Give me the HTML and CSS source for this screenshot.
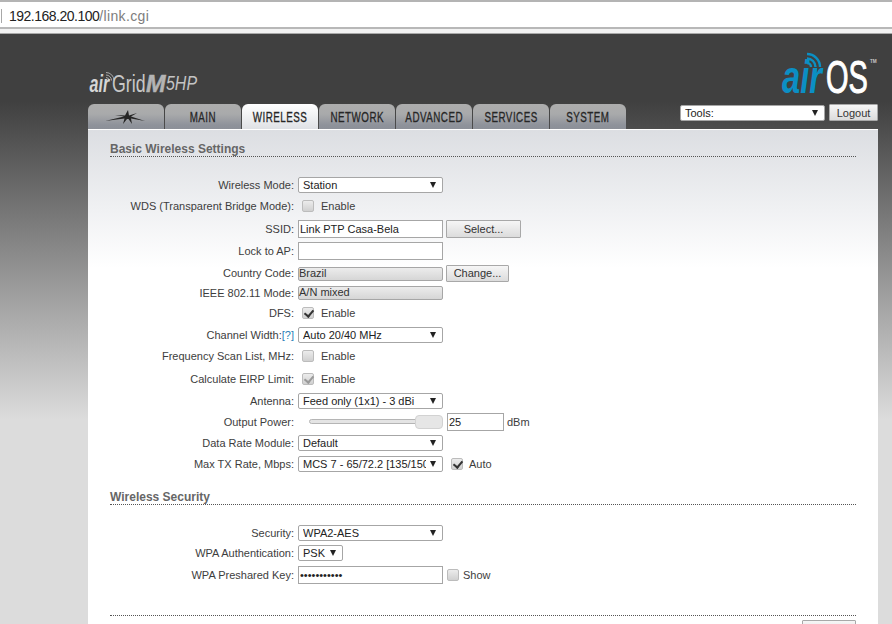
FILE: index.html
```html
<!DOCTYPE html>
<html lang="en">
<head>
<meta charset="utf-8">
<title>airOS - Wireless</title>
<link rel="stylesheet" href="styles.css">
</head>
<body>
<div class="browser">
  <div class="address"><span class="sep"></span><span class="host">192.168.20.100</span><span class="path">/link.cgi</span></div>
</div>
<div class="page">
  <header class="top">
    <svg class="logo-grid" viewBox="0 0 110 26" width="110" height="26" role="img" aria-label="airGrid M5HP">
      <g fill="none" stroke="#b4b4b4" stroke-width="0.9"><path d="M18 7.500a3 3 0 0 1 3 3"/><path d="M18 5a5.500 5.500 0 0 1 5.500 5.500"/><path d="M18 2.500a8 8 0 0 1 8 8"/></g>
      <text class="g-air" transform="translate(1.500 22) scale(.7 1)">air</text>
      <text class="g-grid" transform="translate(24 22) scale(.74 1)">Grid</text>
      <text class="g-m" transform="translate(58 22) scale(.98 1)">M</text>
      <text class="g-hp" transform="translate(78 20) scale(.76 1)">5HP</text>
    </svg>
    <svg class="logo-os" viewBox="0 0 98 54" width="98" height="54" role="img" aria-label="airOS">
      <g fill="none" stroke="#0b8fc4" stroke-width="2.400"><path d="M27 12a4 4 0 0 1 4 4"/><path d="M27 7.500a8.500 8.500 0 0 1 8.500 8.500"/><path d="M27 3a13 13 0 0 1 13 13"/></g>
      <text class="o-air" transform="translate(2 42) scale(.71 1)">air</text>
      <text class="o-os" transform="translate(46 42) scale(.63 1)">OS</text>
      <text class="o-tm" transform="translate(90 12) scale(.85 1)">TM</text>
    </svg>
  </header>
  <div class="navrow">
    <nav class="tabs">
      <a class="tab">
        <svg class="dish" viewBox="0 0 42 16" width="42" height="16" aria-hidden="true">
          <path fill="#262626" d="M0 12 19 7.500 10 6 20 6.500 23 1 24 6.500 32 4 26 7.500 40 12 26 9.500 27 15 23.500 10 22 10 18 15 19.500 9.500Z"/>
        </svg>
      </a>
      <a class="tab"><span class="tab-text">MAIN</span></a>
      <a class="tab active"><span class="tab-text">WIRELESS</span></a>
      <a class="tab"><span class="tab-text">NETWORK</span></a>
      <a class="tab"><span class="tab-text">ADVANCED</span></a>
      <a class="tab"><span class="tab-text">SERVICES</span></a>
      <a class="tab"><span class="tab-text">SYSTEM</span></a>
    </nav>
    <div class="tools">
      <span class="sel-wrap tools-sel"><select><option>Tools:</option></select></span>
      <button class="btn logout" type="button">Logout</button>
    </div>
  </div>
  <main class="panel">
    <h2 class="heading">Basic Wireless Settings</h2>
    <div class="row h20"><label>Wireless Mode:</label><span class="sel-wrap"><select><option>Station</option></select></span></div>
    <div class="row h22"><label>WDS (Transparent Bridge Mode):</label><span class="check"><input type="checkbox"><i class="box"></i></span><span class="chk-label">Enable</span></div>
    <div class="row h24"><label>SSID:</label><input class="text" type="text" value="Link PTP Casa-Bela"><button class="btn select-btn" type="button">Select...</button></div>
    <div class="row h20"><label>Lock to AP:</label><input class="text" type="text"></div>
    <div class="row h24"><label>Country Code:</label><span class="readonly cc">Brazil</span><button class="btn change-btn" type="button">Change...</button></div>
    <div class="row h16"><label>IEEE 802.11 Mode:</label><span class="readonly">A/N mixed</span></div>
    <div class="row h24"><label>DFS:</label><span class="check"><input type="checkbox" checked><i class="box on"></i></span><span class="chk-label">Enable</span></div>
    <div class="row h20"><label>Channel Width:<a class="help">[?]</a></label><span class="sel-wrap"><select><option>Auto 20/40 MHz</option></select></span></div>
    <div class="row h22"><label>Frequency Scan List, MHz:</label><span class="check"><input type="checkbox"><i class="box"></i></span><span class="chk-label">Enable</span></div>
    <div class="row h24"><label>Calculate EIRP Limit:</label><span class="check"><input type="checkbox" checked disabled><i class="box on dim"></i></span><span class="chk-label">Enable</span></div>
    <div class="row h20"><label>Antenna:</label><span class="sel-wrap"><select><option>Feed only (1x1) - 3 dBi</option></select></span></div>
    <div class="row h22"><label>Output Power:</label><span class="slider"><i class="track"></i><i class="thumb"></i></span><input class="text power" type="text" value="25"><span class="unit">dBm</span></div>
    <div class="row h20"><label>Data Rate Module:</label><span class="sel-wrap"><select><option>Default</option></select></span></div>
    <div class="row h22"><label>Max TX Rate, Mbps:</label><span class="sel-wrap"><select><option>MCS 7 - 65/72.2 [135/150]</option></select></span><span class="check auto"><input type="checkbox" checked><i class="box on"></i></span><span class="chk-label">Auto</span></div>

    <h2 class="heading second">Wireless Security</h2>
    <div class="row h20"><label>Security:</label><span class="sel-wrap"><select><option>WPA2-AES</option></select></span></div>
    <div class="row h20"><label>WPA Authentication:</label><span class="sel-wrap psk"><select><option>PSK</option></select></span></div>
    <div class="row h24"><label>WPA Preshared Key:</label><input class="text" type="password" value="12345678901"><span class="check show"><input type="checkbox"><i class="box"></i></span><span class="chk-label">Show</span></div>

    <div class="footer"><button class="btn change" type="button" aria-label="Change"></button></div>
  </main>
</div>
</body>
</html>
```
FILE: styles.css
```css
* { box-sizing: border-box; }
html, body { height: 100%; }
body {
  margin: 0;
  height: 624px;
  overflow: hidden;
  background: #fff;
  font-family: "Liberation Sans", Arial, sans-serif;
  font-size: 11px;
  color: #333;
  display: flex;
  flex-direction: column;
}

/* browser chrome */
.browser {
  height: 34px;
  flex: none;
  border-top: 2px solid #b4b4b4;
  background: #f2f2f2;
  border-bottom: 1px solid #a9a9a9;
}
.address {
  height: 27px;
  background: #fff;
  border-bottom: 2px solid #b8b8b8;
  display: flex;
  align-items: center;
  padding-left: 1px;
  padding-top: 3px;
  font-size: 14px;
}
.sep { width: 1px; height: 14px; background: #a8a8a8; margin-right: 7px; }
.host { color: #222; letter-spacing: -0.5px; }
.path { color: #7d7d7d; letter-spacing: 0.35px; }

/* page */
.page {
  flex: 1;
  min-height: 0;
  overflow: hidden;
  padding-left: 88px;
  width: 892px;
  background: linear-gradient(#404040 0, #404040 68px, #dcdcdc 386px);
}
.top {
  width: 790px;
  height: 70px;
  display: flex;
  justify-content: space-between;
  align-items: flex-end;
}
.logo-grid { margin-bottom: 8px; }
.logo-os { margin-bottom: -1px; }
.g-air { font: italic 700 23px "Liberation Sans", sans-serif; fill: #d6d6d6; }
.g-grid { font: 400 24px "Liberation Sans", sans-serif; fill: #c8c8c8; }
.g-m { font: italic 700 24px "Liberation Sans", sans-serif; fill: #b4b4b4; stroke: #b4b4b4; stroke-width: .5px; }
.g-hp { font: italic 400 21px "Liberation Sans", sans-serif; fill: #c4c4c4; }
.o-air { font: italic 700 46px "Liberation Sans", sans-serif; fill: #0b8fc4; }
.o-os { font: 400 46px "Liberation Sans", sans-serif; fill: #fff; stroke: #fff; stroke-width: 1px; }
.o-tm { font: 700 5.500px "Liberation Sans", sans-serif; fill: #c8c8c8; }

.navrow {
  width: 790px;
  height: 25px;
  display: flex;
  justify-content: space-between;
}
.tabs { display: flex; gap: 1px; }
.tab {
  width: 76px;
  height: 25px;
  display: flex;
  align-items: center;
  justify-content: center;
  border-radius: 6px 6px 0 0;
  background: linear-gradient(#adadad 0, #a9aaab 40%, #8e929a 85%, #8c9098 100%);
  color: #262626;
  padding-top: 1px;
}
.tab-text {
  display: inline-block;
  font-size: 14px;
  letter-spacing: 0.7px;
  transform: scaleX(.7);
  -webkit-text-stroke: 0.3px #262626;
}
.tab.active {
  background: linear-gradient(#fff 0, #f3f4f5 40%, #dfe1e5 100%);
}
.dish { display: block; margin-top: -1px; }
.tools { display: flex; gap: 4px; align-items: flex-start; }
.tools-sel { width: 144px; margin-top: 1px; }
.tools-sel select { border-width: 1px; border-color: #8a8a8a; border-radius: 0; padding-left: 4px; font-size: 10.500px; }

/* panel */
.panel {
  width: 790px;
  height: 495px;
  overflow: hidden;
  padding: 12px 22px 0;
  border-top: 1px solid #fff;
  background: linear-gradient(#dcdee2 0, #f0f1f3 80px, #fff 138px);
}
.heading {
  margin: -1px 0 18px;
  height: 16px;
  line-height: 16px;
  font-size: 12px;
  font-weight: 700;
  color: #666;
  border-bottom: 1px dotted #555;
}
.heading.second { margin-top: 14px; line-height: 17px; }

.row { display: flex; align-items: center; }
.h16 { height: 16px; }
.h20 { height: 20px; }
.h22 { height: 22px; }
.h24 { height: 24px; }
.row label { width: 184px; margin-right: 4px; text-align: right; color: #3d3d3d; flex: none; white-space: nowrap; }
.help { color: #2a7fb8; }

.sel-wrap { position: relative; display: block; width: 145px; height: 16px; }
.sel-wrap select {
  appearance: none;
  width: 100%;
  height: 100%;
  margin: 0;
  padding: 0 16px 0 4px;
  font: 11px "Liberation Sans", sans-serif;
  color: #222;
  background: #fff;
  border: 1px solid #a6a6a6;
  border-radius: 2px;
  display: block;
}
.sel-wrap::after {
  content: "";
  position: absolute;
  right: 7px;
  top: 5px;
  border-left: 3.500px solid transparent;
  border-right: 3.500px solid transparent;
  border-top: 6px solid #222;
  pointer-events: none;
}
.sel-wrap.psk { width: 45px; }

.text {
  width: 145px;
  height: 18px;
  margin: 0;
  padding: 0 1px;
  font: 11px "Liberation Sans", sans-serif;
  color: #222;
  background: #fff;
  border: 1px solid #a6a6a6;
  border-radius: 0;
}
.text.power { width: 57px; margin-left: 4px; }
.unit { margin-left: 3px; color: #3d3d3d; }

.readonly {
  display: block;
  width: 145px;
  height: 14px;
  line-height: 11px;
  padding-left: 0;
  color: #333;
  border: 1px solid #a6a6a6;
  border-radius: 2px;
  background: linear-gradient(#ececec, #d6d6d6);
}
.cc { margin-top: 1px; }

.btn {
  height: 18px;
  padding: 0;
  margin: 0;
  font: 11px "Liberation Sans", sans-serif;
  color: #333;
  border: 1px solid #a8a8a8;
  border-radius: 1px;
  background: linear-gradient(#f6f6f6, #dcdcdc);
}
.select-btn { width: 75px; margin-left: 3px; }
.change-btn { width: 63px; margin-left: 3px; height: 17px; }
.logout { width: 49px; height: 17px; }
.change { width: 54px; flex: none; }

.check { position: relative; display: block; width: 12px; height: 12px; margin-left: 4px; flex: none; }
.check input { position: absolute; inset: 0; margin: 0; opacity: 0; width: 12px; height: 12px; }
.box {
  display: block;
  width: 12px;
  height: 12px;
  border: 1px solid #bcbcbc;
  border-radius: 2px;
  background: linear-gradient(#ececec, #d0d0d0);
}
.box.on::after {
  content: "";
  display: block;
  width: 4px;
  height: 7px;
  margin: 0 0 0 3px;
  border-right: 2px solid #333;
  border-bottom: 2px solid #333;
  transform: rotate(40deg);
}
.box.dim::after { border-color: #9a9a9a; }
.chk-label { margin-left: 7px; color: #3d3d3d; }
.check.auto { margin-left: 8px; }
.check.show { margin-left: 4px; }
.check.show + .chk-label { margin-left: 4px; }
.check.auto + .chk-label { margin-left: 6px; }

.slider { position: relative; display: block; width: 145px; height: 14px; }
.track {
  position: absolute;
  left: 11px;
  right: 20px;
  top: 4px;
  height: 5px;
  border: 1px solid #b5b5b5;
  border-radius: 3px;
  background: #e4e4e4;
}
.thumb {
  position: absolute;
  right: 0;
  top: 0;
  width: 28px;
  height: 14px;
  border: 1px solid #d2d2d2;
  border-radius: 4px;
  background: #e6e6e6;
}

.footer {
  margin-top: 28px;
  border-top: 1px dotted #555;
  padding-top: 4px;
  display: flex;
  justify-content: flex-end;
}
```
